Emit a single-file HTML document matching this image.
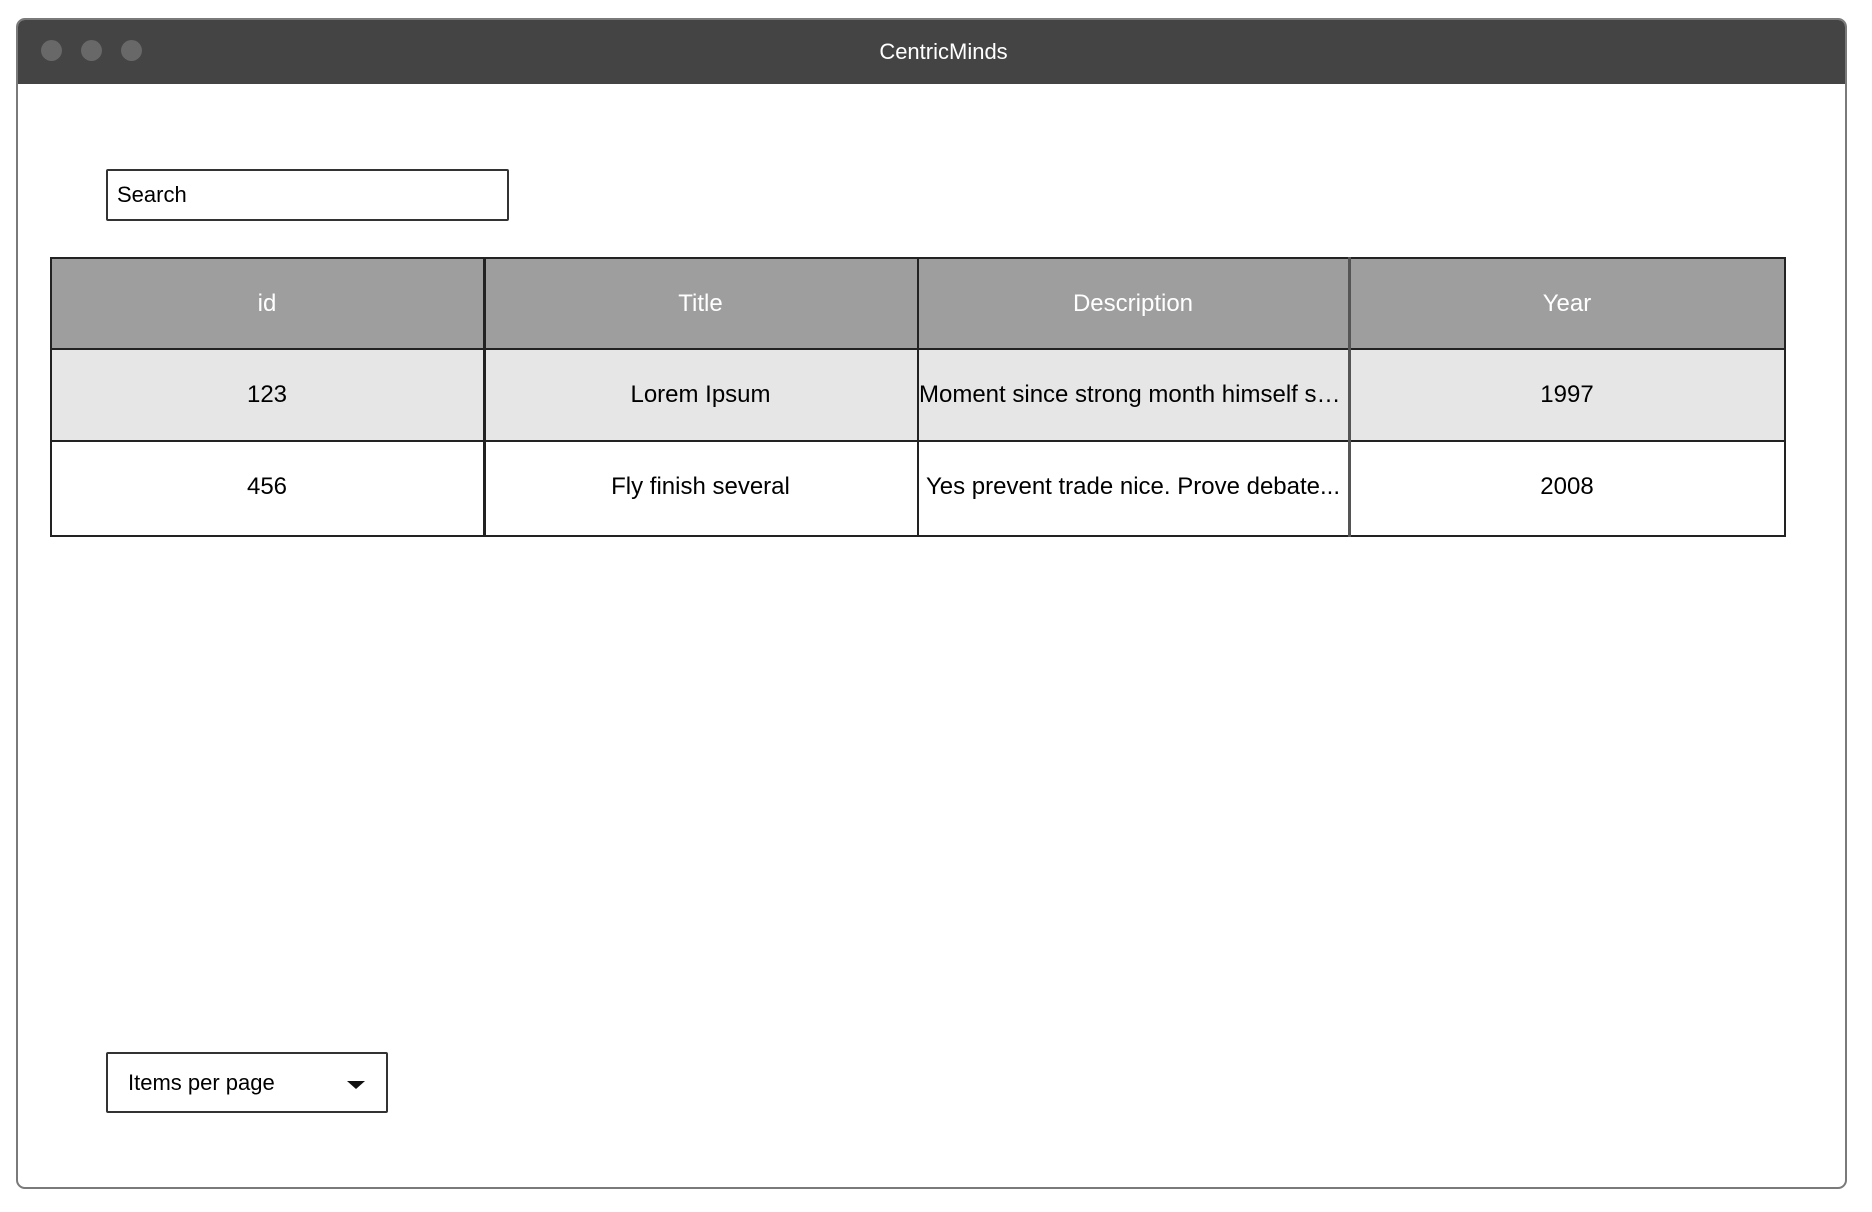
<!DOCTYPE html>
<html><head><meta charset="utf-8"><style>
*{box-sizing:border-box;margin:0;padding:0}
body{width:1872px;height:1212px;background:#fff;font-family:"Liberation Sans",sans-serif;position:relative;overflow:hidden}
.win{position:absolute;left:16px;top:18px;border:2px solid #7a7a7a;border-radius:9px;overflow:hidden;background:#fff}
.bar{position:absolute;left:0;top:0;right:0;height:64px;background:#444}
.dot{position:absolute;top:20px;width:21px;height:21px;border-radius:50%;background:#686868}
.title{position:absolute;left:24px;right:0;top:0;height:64px;line-height:64px;text-align:center;color:#fff;font-size:22px}
.box{position:absolute;border:2px solid #333;background:#fff;border-radius:2px;font-size:22px;color:#000}
.cell{position:absolute;display:flex;align-items:center;justify-content:center;font-size:24px;white-space:nowrap;overflow:hidden}
.h{background:#9e9e9e;color:#fff}
.r1{background:#e6e6e6}
.vl{position:absolute;width:2px;background:#222}
.hl{position:absolute;height:2px;background:#222}
</style></head><body>
<div class="win" style="width:1831px;height:1171px">
<div class="bar"></div>
<div class="dot" style="left:23px"></div><div class="dot" style="left:63px"></div><div class="dot" style="left:103px"></div>
<div class="title">CentricMinds</div>
</div>
<div class="box" style="left:106px;top:169px;width:403px;height:52px;line-height:48px;padding-left:9px">Search</div>

<div class="cell h" style="left:50px;top:258px;width:434px;height:91px">id</div>
<div class="cell h" style="left:484px;top:258px;width:433px;height:91px">Title</div>
<div class="cell h" style="left:917px;top:258px;width:432px;height:91px">Description</div>
<div class="cell h" style="left:1349px;top:258px;width:436px;height:91px">Year</div>
<div class="cell r1" style="left:50px;top:349px;width:434px;height:91px">123</div>
<div class="cell r1" style="left:484px;top:349px;width:433px;height:91px">Lorem Ipsum</div>
<div class="cell r1" style="left:919px;top:349px;width:430px;height:91px;justify-content:flex-start;text-overflow:ellipsis">Moment since strong month himself s…</div>
<div class="cell r1" style="left:1349px;top:349px;width:436px;height:91px">1997</div>
<div class="cell" style="left:50px;top:440px;width:434px;height:94px">456</div>
<div class="cell" style="left:484px;top:440px;width:433px;height:94px">Fly finish several</div>
<div class="cell" style="left:917px;top:440px;width:432px;height:94px">Yes prevent trade nice. Prove debate...</div>
<div class="cell" style="left:1349px;top:440px;width:436px;height:94px">2008</div>

<div class="hl" style="left:50px;top:257px;width:1736px"></div>
<div class="hl" style="left:50px;top:348px;width:1736px"></div>
<div class="hl" style="left:50px;top:440px;width:1736px"></div>
<div class="hl" style="left:50px;top:535px;width:1736px"></div>
<div class="vl" style="left:50px;top:257px;height:280px"></div>
<div class="vl" style="left:483px;top:257px;height:280px;width:3px"></div>
<div class="vl" style="left:917px;top:257px;height:280px"></div>
<div class="vl" style="left:1348px;top:257px;height:280px;width:3px;background:#555"></div>
<div class="vl" style="left:1784px;top:257px;height:280px"></div>

<div class="box" style="left:106px;top:1052px;width:282px;height:61px;line-height:57px;padding-left:20px">Items per page
<svg style="position:absolute;left:238px;top:26px" width="20" height="10"><path d="M1 1 L19 1 L10 9 Z" fill="#111"/></svg></div>
</body></html>
